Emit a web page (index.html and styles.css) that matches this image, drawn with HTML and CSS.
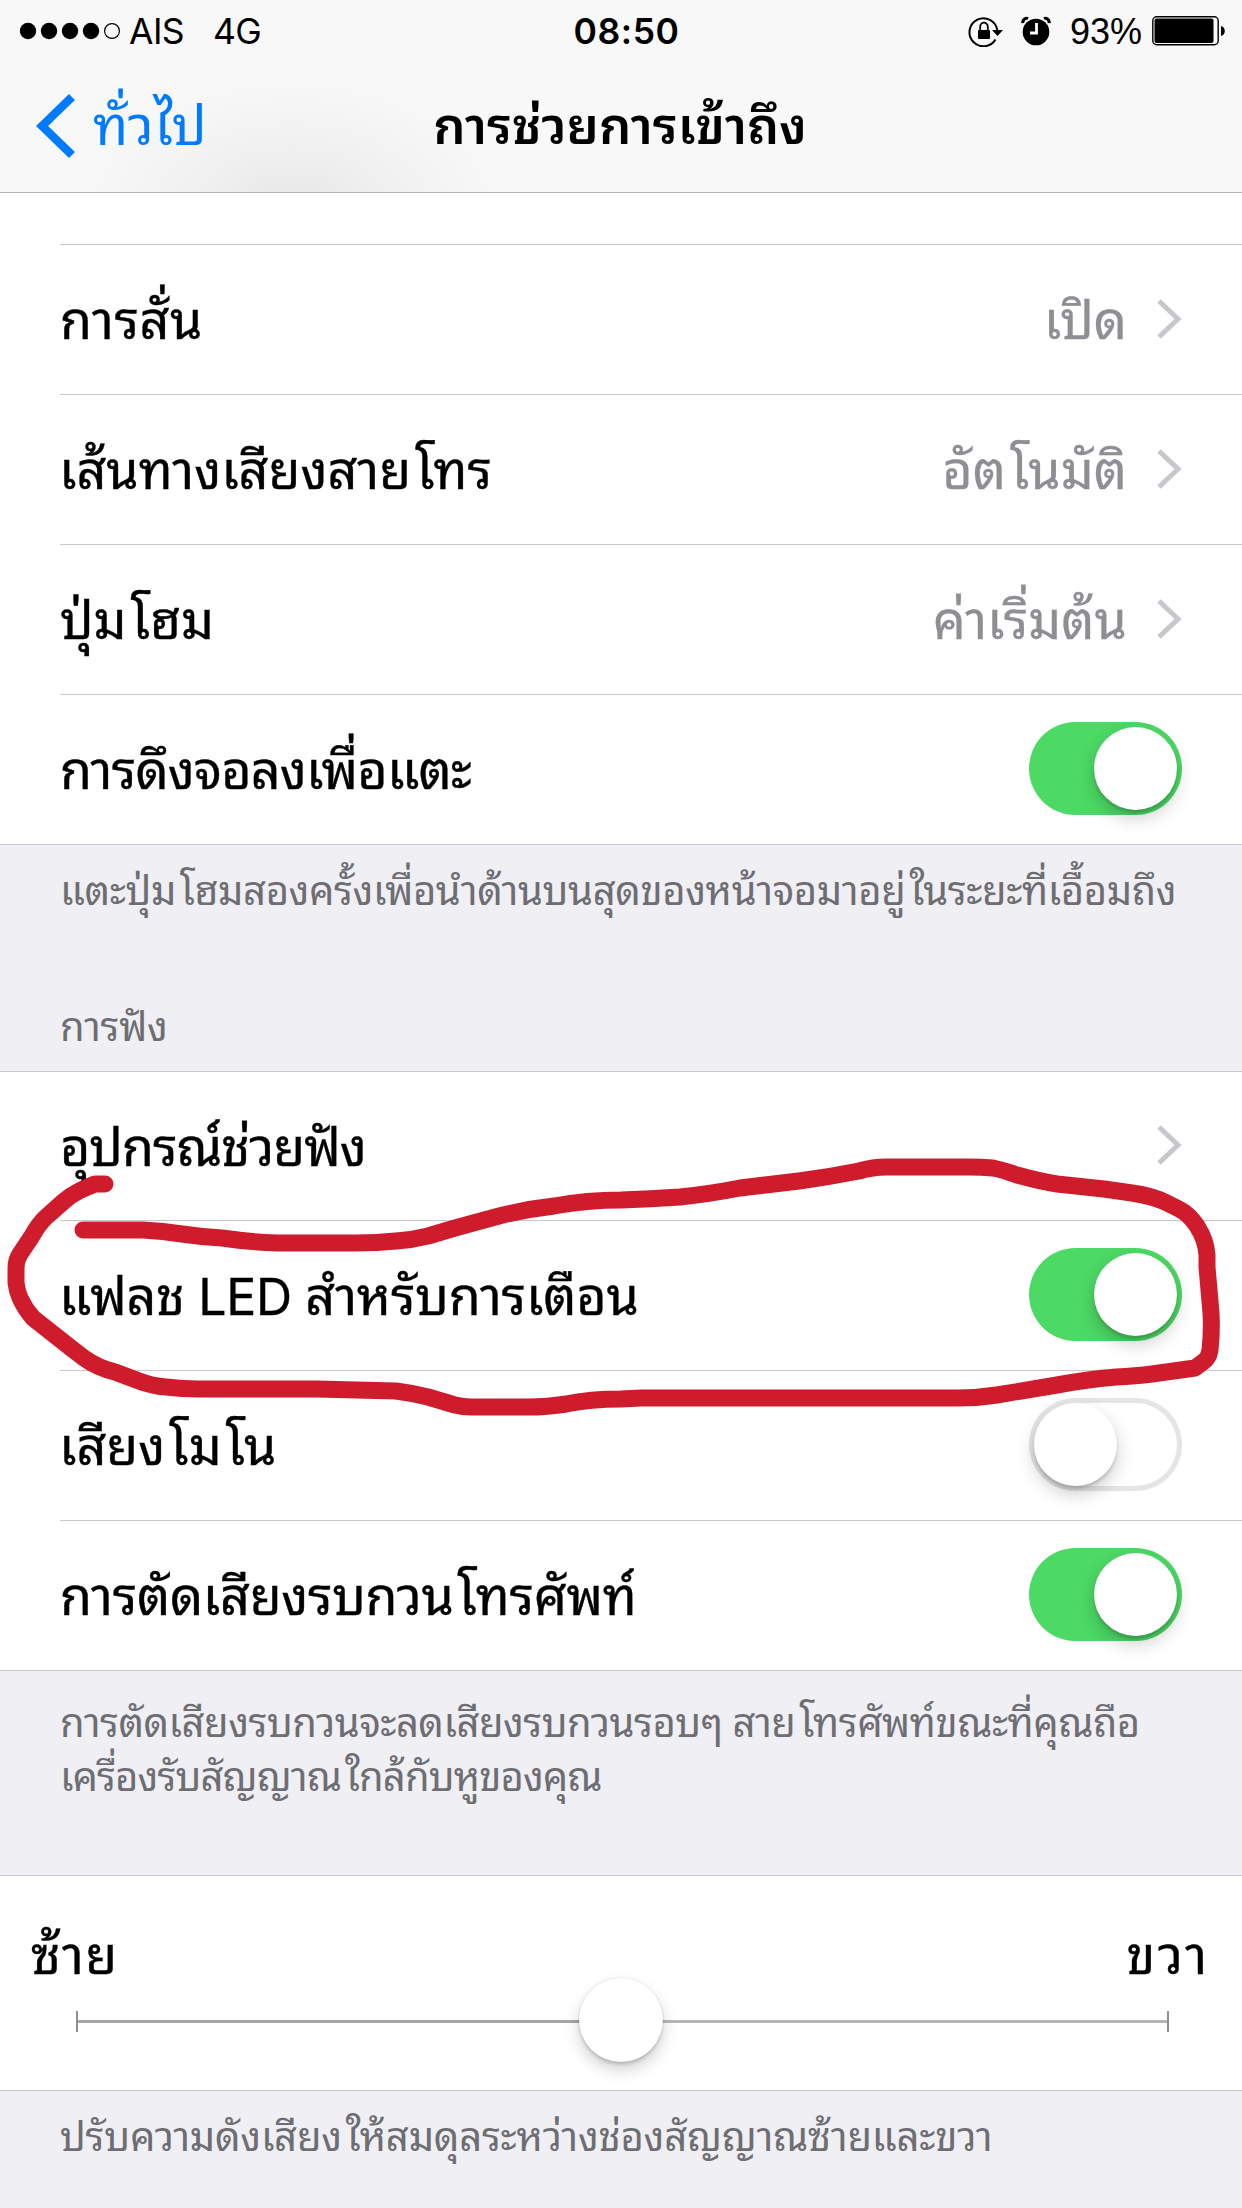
FILE: index.html
```
<!DOCTYPE html>
<html lang="th">
<head>
<meta charset="utf-8">
<title>การช่วยการเข้าถึง</title>
<link rel="stylesheet" href="styles.css">
</head>
<body>
<header class="top">
  <div class="status">
    <div class="status-left">
      <svg class="signal" width="104" height="18" viewBox="0 0 104 18"><circle cx="9" cy="9" r="8.200"/><circle cx="30" cy="9" r="8.200"/><circle cx="51" cy="9" r="8.200"/><circle cx="72" cy="9" r="8.200"/><circle cx="93" cy="9" r="7.400" fill="none" stroke="#000" stroke-width="1.200"/></svg>
      <span class="carrier">AIS</span><span class="network">4G</span>
    </div>
    <div class="clock">08:50</div>
    <div class="status-right">
      <svg width="36" height="32" viewBox="0 0 36 32"><path d="M27.500 24.500A14 14 0 1 1 29.300 15" fill="none" stroke="#000" stroke-width="2"/><path d="M24 15h11l-5.500 6z"/><rect x="10" y="15" width="12" height="9" rx="1"/><path d="M12.200 15v-3.500a3.800 3.800 0 0 1 7.600 0V15" fill="none" stroke="#000" stroke-width="1.800"/></svg>
      <svg class="alarm" width="30" height="32" viewBox="0 0 30 32"><circle cx="15" cy="17" r="13.300"/><path d="M1.800 8.200C1.500 4 5 2.500 7 3.600M28.200 8.200C28.500 4 25 2.500 23 3.600" fill="none" stroke="#000" stroke-width="3"/><path d="M15.500 8v10H9" fill="none" stroke="#fff" stroke-width="2.800"/></svg>
      <span class="percent">93%</span>
      <svg class="battery" width="74" height="30" viewBox="0 0 74 30"><rect x=".8" y=".8" width="65.400" height="28" rx="4" fill="none" stroke="#000" stroke-width="1.400"/><rect x="2.500" y="2.500" width="59" height="24.600" rx="2"/><path d="M69 10c5 1 5 9 0 10z"/></svg>
    </div>
  </div>
  <nav class="nav">
    <a class="back"><svg width="40" height="66" viewBox="0 0 40 66"><path d="M36 4L6 33l30 29" fill="none" stroke="#007aff" stroke-width="8.500"/></svg><span>ทั่วไป</span></a>
    <h1>การช่วยการเข้าถึง</h1>
  </nav>
</header>
<main>
  <section class="group first">
    <div class="row stub"></div>
    <div class="row"><span class="label t1">การสั่น</span><span class="value v1">เปิด</span><svg class="chev" width="26" height="42" viewBox="0 0 26 42"><path d="M3 3l19 18L3 39"/></svg></div>
    <div class="row"><span class="label t2">เส้นทางเสียงสาย<i>โ</i>ทร</span><span class="value v2">อัต<i>โ</i>นมัติ</span><svg class="chev" width="26" height="42" viewBox="0 0 26 42"><path d="M3 3l19 18L3 39"/></svg></div>
    <div class="row"><span class="label t3">ปุ่ม<i>โ</i>ฮม</span><span class="value v3">ค่าเริ่มต้น</span><svg class="chev" width="26" height="42" viewBox="0 0 26 42"><path d="M3 3l19 18L3 39"/></svg></div>
    <div class="row"><span class="label t4">การดึงจอลงเพื่อแตะ</span><span class="switch on"></span></div>
  </section>
  <p class="note n1">แตะปุ่ม<i>โ</i>ฮมสองครั้งเพื่อนำด้านบนสุดของหน้าจอมาอยู่<i>ใ</i>นระยะที่เอื้อมถึง</p>
  <h2 class="heading">การฟัง</h2>
  <section class="group hearing">
    <div class="row"><span class="label t5">อุปกรณ์ช่วยฟัง</span><svg class="chev" width="26" height="42" viewBox="0 0 26 42"><path d="M3 3l19 18L3 39"/></svg></div>
    <div class="row"><span class="label t6">แฟลช <b>LED</b> สำหรับการเตือน</span><span class="switch on"></span></div>
    <div class="row"><span class="label t7">เสียง<i>โ</i>ม<i>โ</i>น</span><span class="switch"></span></div>
    <div class="row"><span class="label t8">การตัดเสียงรบกวน<i>โ</i>ทรศัพท์</span><span class="switch on"></span></div>
  </section>
  <p class="note n2">การตัดเสียงรบกวนจะลดเสียงรบกวนรอบๆ สาย<i>โ</i>ทรศัพท์ขณะที่คุณถือ<br><span class="n2b">เครื่องรับสัญญาณ<i>ใ</i>กล้กับหูของคุณ</span></p>
  <section class="group balance">
    <div class="ends"><span class="left">ซ้าย</span><span class="right">ขวา</span></div>
    <div class="track"><span class="thumb"></span></div>
  </section>
  <p class="note n3">ปรับความดังเสียง<i>ใ</i>ห้สมดุลระหว่างช่องสัญญาณซ้ายและขวา</p>
</main>
<svg class="scribble" width="1242" height="2208" viewBox="0 0 1242 2208"><path d="M105 1184L95 1184Q87 1187 79 1191T63 1202L45 1218Q38 1225 32 1236L20 1254Q16 1260 16 1268V1283Q17 1291 20 1298Q25 1309 33 1318L52 1333L71 1348L84 1358Q98 1368 115 1372L139 1381Q152 1386 166 1387Q182 1389 198 1389H317L396 1391Q412 1393 428 1397L455 1405Q463 1407 471 1407H527Q548 1407 566 1404Q590 1399 621 1399L641 1398H958Q978 1398 997 1395L1057 1385Q1090 1379 1116 1377Q1136 1376 1152 1374L1195 1368L1203 1362Q1209 1358 1210 1350Q1212 1332 1211 1313L1207 1267V1255Q1206 1240 1197 1226Q1189 1214 1179 1209L1167 1203Q1153 1196 1132 1193L1104 1189L1057 1184Q1038 1181 1017 1175Q1003 1170 993 1168Q981 1167 970 1167H886Q873 1167 859 1171Q829 1177 799 1181L740 1188Q709 1194 680 1197Q650 1199 621 1200Q587 1200 554 1206Q527 1209 499 1216L455 1228L428 1236Q412 1240 396 1241Q377 1243 356 1243H277Q249 1242 222 1238Q202 1237 182 1234Q163 1231 143 1230H83"/></svg>
</body>
</html>
```
FILE: styles.css
```
* { box-sizing: border-box; margin: 0; padding: 0; }
html { overflow: hidden; }
body {
  position: relative;
  width: 1242px;
  height: 2208px;
  overflow: hidden;
  background: #efeff4;
  color: #000;
  font-family: "Noto Sans Thai Looped", "Liberation Sans", "Noto Sans", sans-serif;
  font-size: 52px;
}
i { font-style: normal; padding-left: 4px; }
b { font-family: Inter, "Liberation Sans", sans-serif; font-weight: 400; font-size: 50px; line-height: 1; }
svg { display: block; flex: none; }
.top {
  height: 193px;
  border-bottom: 1px solid #b2b2b2;
  background: radial-gradient(ellipse 210px 130px at 292px 208px, #e6e6e6, #f0f0f0 45%, rgba(248, 248, 248, 0)), #f8f8f8;
}
.status {
  display: grid;
  grid-template-columns: 1fr auto 1fr;
  height: 60px;
  padding: 0 16px 0 19px;
  align-items: center;
  font: 35.500px/60px Inter, "Liberation Sans", sans-serif;
}
.status-left, .status-right { display: flex; align-items: center; }
.status-right { justify-content: flex-end; }
.status span, .clock { padding-top: 2px; }
.carrier { margin-left: 6px; letter-spacing: -.6px; }
.network { margin-left: 29px; letter-spacing: -.8px; }
.clock { margin-left: 8px; font-weight: 600; letter-spacing: .6px; }
.alarm { margin-left: 17px; }
.percent { margin-left: 19px; font-family: "Liberation Sans", sans-serif; font-size: 36px; }
.battery { margin-left: 10px; }
.nav {
  display: grid;
  grid-template-columns: 1fr auto 1fr;
  height: 132px;
  padding: 0 38px 0 36px;
  align-items: center;
  line-height: 122px;
}
.back { display: flex; align-items: center; color: #007aff; font-size: 54px; gap: 17px; }
.back span, h1 { padding-bottom: 10px; }
h1 { font-size: 51px; font-weight: 600; }
.group { border-top: 1px solid #c8c7cc; border-bottom: 1px solid #c8c7cc; background: #fff; }
.group.first { border-top: 0; }
.row {
  display: flex;
  align-items: center;
  height: 150px;
  margin-left: 60px;
  padding-right: 60px;
  border-bottom: 1px solid #c8c7cc;
  line-height: 80px;
  white-space: nowrap;
}
.hearing .row:first-child { height: 149px; }
.row:last-child { height: 149px; border-bottom: 0; }
.row.stub { height: 52px; }
.label, .value { padding-bottom: 7px; }
.label { margin-right: auto; }
.label, .ends { -webkit-text-stroke: .4px #000; }
.value { color: #8e8e93; -webkit-text-stroke: .3px #8e8e93; }
.t1 { letter-spacing: .6px; }
.t2, .t6, .t7 { margin-left: -1px; }
.t4 { letter-spacing: -.8px; }
.t5 { letter-spacing: -1px; }
.t6 { letter-spacing: -.2px; }
.t8 { letter-spacing: -.28px; }
.chev { margin: 0 0 2px 29px; fill: none; stroke: #c7c7cc; stroke-width: 5; }
.switch {
  display: flex;
  width: 153px;
  height: 93px;
  margin-bottom: 2px;
  padding: 5px;
  border-radius: 47px;
  background: #fff;
  box-shadow: inset 0 0 0 5px #e5e5e5;
}
.switch::before {
  content: "";
  width: 83px;
  height: 83px;
  border-radius: 50%;
  background: #fff;
  box-shadow: 0 8px 18px rgba(0, 0, 0, .2), 0 3px 3px rgba(0, 0, 0, .14);
}
.switch.on { justify-content: flex-end; background: #4cd964; box-shadow: none; }
.note, .heading {
  padding-left: 60px;
  color: #6d6d72;
  font-size: 40px;
  font-weight: 400;
  line-height: 54px;
  white-space: nowrap;
}
.n1 { height: 136px; padding-top: 15px; letter-spacing: -.38px; }
.heading { height: 90px; padding-top: 15px; letter-spacing: -.2px; }
.n2 { height: 204px; padding-top: 21px; letter-spacing: -.47px; }
.n2b { letter-spacing: -.88px; }
.n3 { padding-top: 15px; letter-spacing: -.22px; }
.balance { height: 216px; padding: 35px 32px 0 31px; }
.ends { display: flex; justify-content: space-between; height: 100px; line-height: 80px; }
.ends .left { letter-spacing: 1.200px; }
.ends .right { letter-spacing: 2.800px; }
.track {
  display: flex;
  justify-content: center;
  align-items: center;
  height: 21px;
  margin: 0 41px 0 45px;
  border: solid #8f8f8f;
  border-width: 0 2px;
  background: linear-gradient(90deg, #a6a6a6 50%, #b6b6b6 50%) center / 100% 3px no-repeat;
}
.thumb {
  flex: none;
  width: 84px;
  height: 84px;
  margin: 0 4px 4px 0;
  border-radius: 50%;
  background: #fff;
  box-shadow: 0 0 1px 1px rgba(0, 0, 0, .05), 0 8px 16px rgba(0, 0, 0, .18), 0 3px 3px rgba(0, 0, 0, .12);
}
.scribble { position: absolute; left: 0; top: 0; fill: none; stroke: #cf1c2c; stroke-width: 17; stroke-linecap: round; stroke-linejoin: round; pointer-events: none; }
```
